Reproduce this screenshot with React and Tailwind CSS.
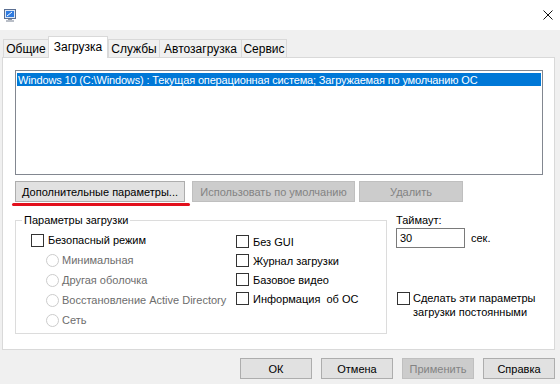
import React from 'react';

const font = { fontFamily: '"Liberation Sans", Arial, sans-serif' };

function Btn({ children, disabled, className = '' }) {
  return (
    <div
      className={`h-[21px] flex items-center justify-center border whitespace-nowrap ${
        disabled
          ? 'bg-[#cccccc] border-[#bfbfbf] text-[#838383]'
          : 'bg-[#e1e1e1] border-[#adadad] text-black'
      } ${className}`}
    >
      {children}
    </div>
  );
}

function Check({ label, className = '' }) {
  return (
    <div className={`flex items-center gap-[4px] ${className}`}>
      <div className="w-[13px] h-[13px] border border-[#333333] bg-white shrink-0" />
      <span>{label}</span>
    </div>
  );
}

function Radio({ label }) {
  return (
    <div className="flex items-center gap-[3px] h-[20px] pl-[15px] text-[#6d6d6d]">
      <div className="w-[13px] h-[13px] rounded-full border border-[#cccccc] bg-white shrink-0" />
      <span>{label}</span>
    </div>
  );
}

function Tab({ label, width, active, last }) {
  if (active) {
    return (
      <div
        className="h-[22px] bg-white border-x border-t border-[#d9d9d9] flex items-center justify-center relative z-10 pb-[2px]"
        style={{ width }}
      >
        {label}
      </div>
    );
  }
  return (
    <div
      className={`h-[18px] mb-[1px] border-t border-l border-[#d9d9d9] flex items-center justify-center ${last ? 'border-r' : ''}`}
      style={{ width }}
    >
      {label}
    </div>
  );
}

export default function App() {
  return (
    <div className="w-[560px] h-[384px] bg-[#f0f0f0] flex flex-col text-[11px] leading-[14px] text-black overflow-hidden whitespace-nowrap" style={font}>
      {/* Title bar */}
      <div className="h-[30px] bg-white flex items-center justify-between pl-[4px] pr-[7px] shrink-0">
        <svg width="12" height="13" viewBox="0 0 12 13">
          <rect x="0.5" y="0.5" width="11" height="9" fill="#dbe6f5" stroke="#5a6f92" />
          <rect x="2" y="2" width="8" height="6" fill="#2f7be0" />
          <path d="M3 7 L8 3" stroke="#ffffff" strokeWidth="1" />
          <rect x="4" y="10" width="4" height="1" fill="#8d95a3" />
          <rect x="2" y="11" width="8" height="2" fill="#b9bec7" />
        </svg>
        <svg width="10" height="10" viewBox="0 0 10 10">
          <path d="M0.5 0.5 L9.5 9.5 M9.5 0.5 L0.5 9.5" stroke="#111111" strokeWidth="1" />
        </svg>
      </div>

      {/* Tabs */}
      <div className="flex items-end h-[22px] mt-[6px] ml-[3px] -mb-px shrink-0 text-[12px]">
        <Tab label="Общие" width={45} />
        <Tab label="Загрузка" width={60} active />
        <Tab label="Службы" width={51} />
        <Tab label="Автозагрузка" width={82} />
        <Tab label="Сервис" width={46} last />
      </div>

      {/* Panel */}
      <div className="ml-[2px] w-[553px] h-[293px] bg-white border border-[#d9d9d9] pl-[12px] pt-[12px] shrink-0">
        <div className="w-[528px] h-[105px] border border-[#828790] px-[1px] pt-[2px]">
          <div className="h-[13px] bg-[#0078d7] text-white pl-[1px] flex items-center tracking-[-0.15px]">
            Windows 10 (C:\Windows) : Текущая операционная система; Загружаемая по умолчанию ОС
          </div>
        </div>

        <div className="flex mt-[6px]">
          <div className="relative">
            <Btn className="w-[170px]">Дополнительные параметры...</Btn>
            <div className="absolute left-[-3px] right-[-5px] bottom-[-4px] h-[3px] rounded-full bg-[#e2101c]" />
          </div>
          <Btn disabled className="w-[163px] ml-[7px]">Использовать по умолчанию</Btn>
          <Btn disabled className="w-[104px] ml-[4px]">Удалить</Btn>
        </div>

        <div className="flex mt-[11px]">
          <fieldset className="w-[372px] border border-[#dcdcdc] pb-[3px] flex">
            <legend className="ml-[6px] px-[2px]">Параметры загрузки</legend>
            <div className="w-[220px] pl-[15px] pt-[3px] flex flex-col">
              <Check label="Безопасный режим" className="h-[20px] gap-[3px]" />
              <Radio label="Минимальная" />
              <Radio label="Другая оболочка" />
              <Radio label="Восстановление Active Directory" />
              <Radio label="Сеть" />
            </div>
            <div className="pt-[5px] flex flex-col">
              <Check label="Без GUI" className="h-[19px]" />
              <Check label="Журнал загрузки" className="h-[19px]" />
              <Check label="Базовое видео" className="h-[19px]" />
              <Check label="Информация  об ОС" className="h-[19px] whitespace-pre" />
            </div>
          </fieldset>

          <div className="ml-[9px] flex flex-col">
            <div className="h-[14px]">Таймаут:</div>
            <div className="flex items-center mt-[1px]">
              <div className="w-[69px] h-[20px] border border-[#7a7a7a] bg-white flex items-center pl-[3px]">30</div>
              <span className="ml-[6px]">сек.</span>
            </div>
            <div className="flex mt-[43px] ml-[1px] gap-[3px]">
              <div className="w-[13px] h-[13px] border border-[#333333] bg-white shrink-0 mt-[1px]" />
              <div className="leading-[14px]">
                Сделать эти параметры
                <br />
                загрузки постоянными
              </div>
            </div>
          </div>
        </div>
      </div>

      {/* Bottom buttons */}
      <div className="flex justify-end gap-[9px] pr-[5px] mt-[8px]">
        <Btn className="w-[72px]">ОК</Btn>
        <Btn className="w-[72px]">Отмена</Btn>
        <Btn disabled className="w-[72px]">Применить</Btn>
        <Btn className="w-[72px]">Справка</Btn>
      </div>
    </div>
  );
}
